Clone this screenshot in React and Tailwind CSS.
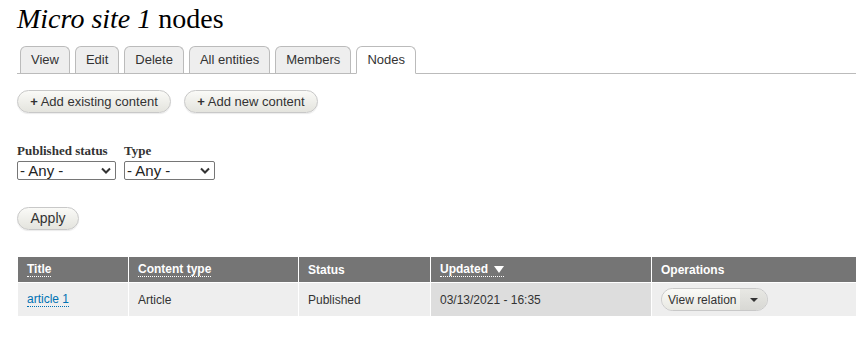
import React from "react";

const sans = { fontFamily: '"Liberation Sans", Arial, sans-serif' };
const serif = { fontFamily: '"Liberation Serif", "Times New Roman", serif' };

function Tab({ children, active }) {
  return (
    <div
      className={
        "h-[27px] px-[10px] flex items-center rounded-t-[6px] border border-[#bbb] text-[13px] text-[#333] " +
        (active ? "bg-white border-b-white -mb-px h-[28px]" : "bg-[#eee] border-b-0")
      }
    >
      {children}
    </div>
  );
}

function PillButton({ children, className = "" }) {
  return (
    <button
      className={
        "h-[23px] whitespace-nowrap rounded-full border border-[#c8c8c8] bg-gradient-to-b from-[#fafaf7] to-[#e4e4de] text-[13px] text-[#333] shadow-[0_1px_1px_rgba(0,0,0,0.08)] " +
        className
      }
    >
      {children}
    </button>
  );
}

function Sel() {
  return (
    <div className="w-full h-[19px] border border-[#767676] rounded-[2px] bg-white flex items-center justify-between pl-[2px] pr-[4px] text-[15px] text-[#222]">
      <span className="leading-none">- Any -</span>
      <svg width="10" height="7" viewBox="0 0 10 7">
        <path d="M1 1.5 L5 5.5 L9 1.5" fill="none" stroke="#333" strokeWidth="2" />
      </svg>
    </div>
  );
}

const th = "h-[26px] bg-[#757575] border-b border-white flex items-center pl-[9px] font-bold text-white";
const td = "h-[33px] flex items-center pl-[9px]";

export default function App() {
  return (
    <div className="w-[856px] h-[354px] bg-white overflow-hidden relative" style={sans}>
      <div className="pl-[17px]">
        <h1 className="pt-[3px] text-[28px] leading-[32px] text-black" style={serif}>
          <i>Micro site 1</i> nodes
        </h1>
        <div className="mt-[12px] flex items-end gap-[5px] pl-[3px] border-b border-[#bbb] h-[27px]">
          <Tab>View</Tab>
          <Tab>Edit</Tab>
          <Tab>Delete</Tab>
          <Tab>All entities</Tab>
          <Tab>Members</Tab>
          <Tab active>Nodes</Tab>
        </div>
        <div className="mt-[16px] flex gap-[13px]">
          <PillButton className="w-[154px]">
            <b>+</b> Add existing content
          </PillButton>
          <PillButton className="w-[134px]">
            <b>+</b> Add new content
          </PillButton>
        </div>
        <div className="mt-[30px] flex gap-[8px]">
          <div className="w-[99px]">
            <div className="text-[13px] font-bold text-[#333] leading-[16px] mb-[2px]" style={serif}>
              Published status
            </div>
            <Sel />
          </div>
          <div className="w-[91px]">
            <div className="text-[13px] font-bold text-[#333] leading-[16px] mb-[2px]" style={serif}>
              Type
            </div>
            <Sel />
          </div>
        </div>
        <div className="mt-[26px]">
          <PillButton className="w-[62px] text-[14px]">Apply</PillButton>
        </div>
      </div>
      <div className="mt-[27px] ml-[18px]">
        <div className="grid grid-cols-[111px_170px_132px_221px_1fr] text-[12px]">
          <div className={th + " border-r"}>
            <span className="border-b border-dotted border-white leading-[14px]">Title</span>
          </div>
          <div className={th + " border-r"}>
            <span className="border-b border-dotted border-white leading-[14px]">Content type</span>
          </div>
          <div className={th + " border-r"}>
            <span>Status</span>
          </div>
          <div className={th + " border-r"}>
            <span className="border-b border-dotted border-white leading-[14px] flex items-center gap-[6px]">
              Updated
              <svg width="10" height="7" viewBox="0 0 10 7">
                <path d="M0 0 H10 L5 7 Z" fill="white" />
              </svg>
            </span>
          </div>
          <div className={th}>
            <span>Operations</span>
          </div>

          <div className={td + " bg-[#eee] border-r border-white text-[#0071b3]"}>
            <span className="border-b border-dotted border-[#0071b3] leading-[14px]">article 1</span>
          </div>
          <div className={td + " bg-[#eee] border-r border-white text-[#333]"}>Article</div>
          <div className={td + " bg-[#eee] border-r border-white text-[#333]"}>Published</div>
          <div className={td + " bg-[#ddd] border-r border-white text-[#333]"}>03/13/2021 - 16:35</div>
          <div className={td + " bg-[#eee]"}>
            <div className="h-[23px] w-[107px] rounded-full border border-[#c8c8c8] flex overflow-hidden text-[12px] text-[#333] whitespace-nowrap">
              <div className="flex-1 flex items-center pl-[6px] bg-gradient-to-b from-[#fafaf7] to-[#e8e8e2]">View relation</div>
              <div className="w-[27px] flex items-center justify-center bg-gradient-to-b from-[#e8e8e4] to-[#d8d8d4]">
                <svg width="8" height="4" viewBox="0 0 8 4">
                  <path d="M0 0 H8 L4 4 Z" fill="#333" />
                </svg>
              </div>
            </div>
          </div>
        </div>
      </div>
    </div>
  );
}
